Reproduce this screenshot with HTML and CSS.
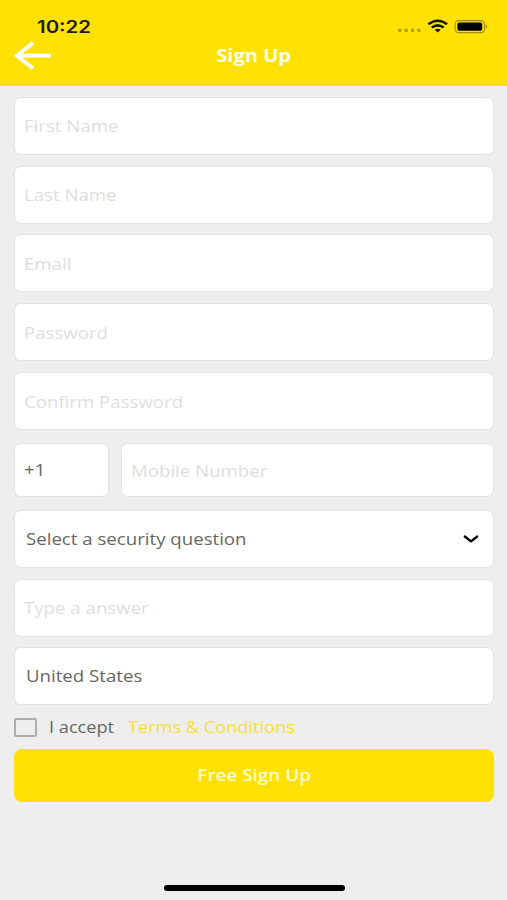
FILE: index.html
```html
<!DOCTYPE html>
<html lang="en">
<head>
<meta charset="utf-8">
<title>Sign Up</title>
<link rel="stylesheet" href="styles.css">
</head>
<body>
<div class="screen">
  <header class="header">
    <div class="status">
      <span class="time"><span class="t">10:22</span></span>
      <svg class="status-icons" width="92" height="16" viewBox="0 0 92 16">
        <g fill="#b59f10"><circle cx="2.8" cy="12.4" r="1.8"/><circle cx="9.2" cy="12.4" r="1.8"/><circle cx="15.6" cy="12.4" r="1.8"/><circle cx="21.8" cy="12.4" r="1.8"/></g>
        <g fill="none" stroke="#1a1700" stroke-width="2.5">
          <path d="M31.3 6.3Q40.7 -0.9 50.1 6.3"/>
          <path d="M34.7 9.6Q40.7 5.1 46.7 9.6"/>
        </g>
        <path d="M37.7 11.7Q40.7 9.6 43.7 11.7L40.7 14.4Z" fill="#1a1700"/>
        <rect x="58.2" y="2.6" width="29.4" height="12" rx="3.6" fill="none" stroke="#a08d08" stroke-width="1.1"/>
        <rect x="60.4" y="4.4" width="24.8" height="8.4" rx="1.8" fill="#000"/>
        <path d="M88.8 6.2Q91.2 8.6 88.8 11Z" fill="#a08d08"/>
      </svg>
    </div>
    <div class="nav">
      <svg class="back" width="40" height="32" viewBox="0 0 40 32" fill="none" stroke="#fff" stroke-width="3.8"><path d="M38 15.7H4M20 2.8L3.8 15.7L20 28.6"/></svg>
      <h1 class="title"><span class="t">Sign Up</span></h1>
    </div>
  </header>
  <main class="form">
    <div class="field"><span class="t">First Name</span></div>
    <div class="field"><span class="t">Last Name</span></div>
    <div class="field"><span class="t">Email</span></div>
    <div class="field"><span class="t">Password</span></div>
    <div class="field"><span class="t">Confirm Password</span></div>
    <div class="phone">
      <div class="field code"><span class="t">+1</span></div>
      <div class="field number"><span class="t">Mobile Number</span></div>
    </div>
    <div class="field filled">
      <span class="t">Select a security question</span>
      <svg class="chevron" width="16" height="10" viewBox="0 0 16 10" fill="none" stroke="#000" stroke-width="2.3" stroke-linecap="round" stroke-linejoin="round"><path d="M1.8 2.5L8 7.3L14.2 2.5"/></svg>
    </div>
    <div class="field"><span class="t">Type a answer</span></div>
    <div class="field filled"><span class="t">United States</span></div>
    <div class="terms">
      <span class="checkbox"></span>
      <span class="accept"><span class="t">I accept</span></span>
      <a class="link"><span class="t">Terms &amp; Conditions</span></a>
    </div>
    <div class="submit"><span class="t">Free Sign Up</span></div>
  </main>
  <div class="home"></div>
</div>
</body>
</html>
```
FILE: styles.css
```css
* { box-sizing: border-box; }
body {
  margin: 0;
  background: #eee;
  font-family: "Open Sans", "Noto Sans", sans-serif;
  font-size: 16px;
  line-height: 22px;
}
.screen {
  width: 507px;
  height: 900px;
  display: flex;
  flex-direction: column;
  background: #eee;
  overflow: hidden;
}
.t {
  display: inline-block;
  white-space: nowrap;
  transform: scaleX(1.165);
  transform-origin: left center;
}
.header {
  height: 86px;
  padding-top: 18px;
  background: #ffe203;
}
.status {
  height: 18px;
  display: flex;
  justify-content: space-between;
  padding: 0 18px 0 37px;
}
.time {
  padding-top: 1px;
  font-family: Inter, "Liberation Sans", sans-serif;
  font-size: 17px;
  line-height: 17px;
  font-weight: 600;
  color: #1f1b00;
}
.time .t { transform: scaleX(1.2); }
.status-icons { display: block; }
.nav {
  height: 40px;
  display: grid;
  grid-template-columns: 60px 1fr 60px;
  align-items: center;
}
.back { margin-left: 13px; }
.title {
  margin: 0;
  text-align: center;
  font-size: 17px;
  font-weight: 700;
  color: #fffef0;
}
.title .t, .submit .t { transform: scaleX(1.18); transform-origin: center; }
.form {
  padding: 10.8px 13px 0 13.5px;
  display: flex;
  flex-direction: column;
  gap: 10.85px;
}
.field {
  height: 58px;
  display: flex;
  align-items: center;
  padding: 1px 0 0 9.5px;
  border: 1.5px solid #e3e3e3;
  border-radius: 7px;
  background: #fff;
  color: #dedede;
}
.phone {
  display: flex;
  gap: 11.5px;
  margin: 2px 0 1.8px;
}
.phone .field { height: 54px; }
.phone .code { width: 95.5px; padding-top: 0; color: #666; }
.number { flex: 1; }
.filled {
  justify-content: space-between;
  color: #666;
  padding: 0 14.5px 0 11px;
}
.terms {
  height: 22px;
  display: flex;
  align-items: center;
}
.terms .t { transform: scaleX(1.135); }
.checkbox {
  width: 23px;
  height: 19px;
  border: 2px solid #adadad;
  border-radius: 2px;
}
.accept { width: 65px; margin: 0 14px 0 12.5px; color: #666; }
.link { color: #fadf36; }
.submit {
  height: 53px;
  margin-top: -0.5px;
  display: flex;
  align-items: center;
  justify-content: center;
  border-radius: 8px;
  background: #ffe203;
  color: #fffbd0;
  font-weight: 600;
}
.home {
  width: 181px;
  height: 6px;
  margin: auto auto 9px 163.5px;
  border-radius: 3px;
  background: #000;
}
```
